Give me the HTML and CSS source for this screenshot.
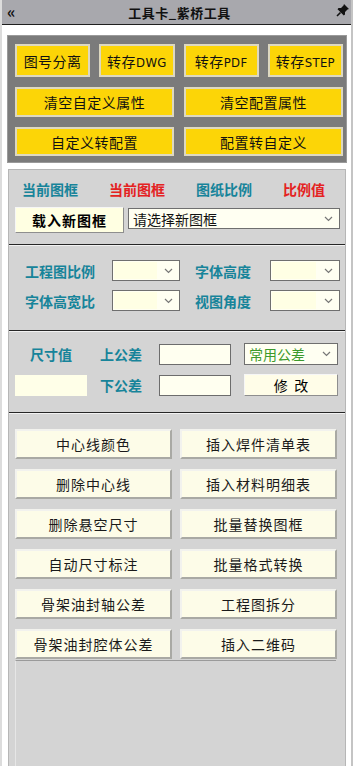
FILE: index.html
```html
<!DOCTYPE html>
<html lang="zh-CN">
<head>
  <meta charset="UTF-8" />
  <meta name="viewport" content="width=device-width, initial-scale=1" />
  <title>工具卡_紫桥工具</title>
  <link rel="stylesheet" href="styles.css">
</head>
<body>
  <div class="window">
    <header class="titlebar">
      <span class="collapse">«</span>
      <span class="title">工具卡_紫桥工具</span>
      <svg class="pin" width="14" height="14" viewBox="0 0 14 14">
        <path d="M8 1 L13 6 L11.5 6.5 L9 9 L9 11.5 L7.8 12.5 L1.5 6.2 L2.5 5 L5 5 L7.5 2.5 Z" fill="#111"/>
        <path d="M4.5 9.5 L1 13" stroke="#111" stroke-width="1.6"/>
      </svg>
    </header>

    <section class="top-panel">
      <div class="row-4">
        <button class="yellow-btn">图号分离</button>
        <button class="yellow-btn">转存<span class="latin">DWG</span></button>
        <button class="yellow-btn">转存<span class="latin">PDF</span></button>
        <button class="yellow-btn">转存<span class="latin">STEP</span></button>
      </div>
      <div class="row-2">
        <button class="yellow-btn">清空自定义属性</button>
        <button class="yellow-btn">清空配置属性</button>
      </div>
      <div class="row-2 last">
        <button class="yellow-btn">自定义转配置</button>
        <button class="yellow-btn">配置转自定义</button>
      </div>
    </section>

    <section class="main-panel">
      <div class="group frame-group">
        <div class="frame-labels">
          <span class="lbl teal">当前图框</span>
          <span class="lbl red">当前图框</span>
          <span class="lbl teal">图纸比例</span>
          <span class="lbl red">比例值</span>
        </div>
        <div class="frame-row">
          <button class="load-btn">载入新图框</button>
          <div class="select wide">
            <span class="select-text">请选择新图框</span>
            <svg class="chev" width="9" height="6" viewBox="0 0 9 6"><path d="M1 1 L4.5 4.5 L8 1" fill="none" stroke="#777" stroke-width="1.2"/></svg>
          </div>
        </div>
      </div>
      <div class="sep"></div>

      <div class="group scale-group">
        <div class="field-row">
          <span class="lbl teal l1">工程图比例</span>
          <div class="select small s1"><span class="fill"></span><svg class="chev" width="9" height="6" viewBox="0 0 9 6"><path d="M1 1 L4.5 4.5 L8 1" fill="none" stroke="#777" stroke-width="1.2"/></svg></div>
          <span class="lbl teal l2">字体高度</span>
          <div class="select small s2"><span class="fill"></span><svg class="chev" width="9" height="6" viewBox="0 0 9 6"><path d="M1 1 L4.5 4.5 L8 1" fill="none" stroke="#777" stroke-width="1.2"/></svg></div>
        </div>
        <div class="field-row">
          <span class="lbl teal l1">字体高宽比</span>
          <div class="select small s1"><span class="fill"></span><svg class="chev" width="9" height="6" viewBox="0 0 9 6"><path d="M1 1 L4.5 4.5 L8 1" fill="none" stroke="#777" stroke-width="1.2"/></svg></div>
          <span class="lbl teal l2">视图角度</span>
          <div class="select small s2"><span class="fill"></span><svg class="chev" width="9" height="6" viewBox="0 0 9 6"><path d="M1 1 L4.5 4.5 L8 1" fill="none" stroke="#777" stroke-width="1.2"/></svg></div>
        </div>
      </div>
      <div class="sep"></div>

      <div class="group tol-group">
        <span class="lbl teal center">尺寸值</span>
        <span class="lbl teal">上公差</span>
        <div class="input"></div>
        <div class="select tol">
          <span class="select-text green">常用公差</span>
          <svg class="chev" width="9" height="6" viewBox="0 0 9 6"><path d="M1 1 L4.5 4.5 L8 1" fill="none" stroke="#777" stroke-width="1.2"/></svg>
        </div>
        <div class="input plain"></div>
        <span class="lbl teal">下公差</span>
        <div class="input"></div>
        <button class="edit-btn">修&nbsp;&nbsp;改</button>
      </div>
      <div class="sep"></div>

      <div class="group tools">
        <button class="cream-btn">中心线颜色</button>
        <button class="cream-btn">插入焊件清单表</button>
        <button class="cream-btn">删除中心线</button>
        <button class="cream-btn">插入材料明细表</button>
        <button class="cream-btn">删除悬空尺寸</button>
        <button class="cream-btn">批量替换图框</button>
        <button class="cream-btn">自动尺寸标注</button>
        <button class="cream-btn">批量格式转换</button>
        <button class="cream-btn">骨架油封轴公差</button>
        <button class="cream-btn">工程图拆分</button>
        <button class="cream-btn">骨架油封腔体公差</button>
        <button class="cream-btn">插入二维码</button>
      </div>
      <div class="bottom-area"></div>
    </section>
  </div>
</body>
</html>
```

FILE: styles.css
```css
body, html {
  margin: 0;
  padding: 0;
  height: 100%;
}
body {
  background: #fff;
  font-family: "Noto Sans CJK SC", "Noto Sans", sans-serif;
  font-size: 14px;
  color: #111;
}
button {
  font-family: inherit;
  padding: 0;
  margin: 0;
  cursor: pointer;
}
.window {
  width: 353px;
  height: 766px;
  box-sizing: border-box;
  display: flex;
  flex-direction: column;
  border-left: 2px solid #dcdcdc;
  border-right: 2px solid #c4c4c4;
  overflow: hidden;
}
.titlebar {
  height: 24px;
  flex: none;
  background: #a8a8ad;
  border-bottom: 1px solid #1e1e1e;
  display: flex;
  align-items: center;
  padding: 0 1px 0 5px;
}
.collapse {
  font-size: 16px;
  font-weight: 700;
  line-height: 1;
  width: 20px;
  margin-top: -2px;
}
.title {
  flex: 1;
  text-align: center;
  font-size: 13px;
  font-weight: 700;
  letter-spacing: 0.5px;
  margin-right: 4px;
}
.pin {
  margin-top: -4px;
}

/* top yellow panel */
.top-panel {
  flex: none;
  margin: 10px 4px 0 5px;
  background: #7b7b7b;
  border: 1px solid #9a9a9a;
  padding: 8px 3px 6px 7px;
  display: flex;
  flex-direction: column;
  gap: 10px;
}
.row-4 { display: grid; grid-template-columns: repeat(4, 1fr); column-gap: 9px; height: 33px; }
.row-2 { display: grid; grid-template-columns: 1fr 1fr; column-gap: 10px; height: 30px; }
.row-2.last { height: 29px; }
.yellow-btn {
  background: #fcd507;
  border: 2px solid #ddd8c0;
  font-size: 14px;
  color: #111;
  letter-spacing: 0.5px;
}
.latin {
  font-family: "DejaVu Sans", sans-serif;
  font-size: 13px;
  font-stretch: condensed;
  letter-spacing: 0.3px;
}

/* main gray panel */
.main-panel {
  flex: 1;
  margin: 6px 5px 0 6px;
  background: #d4d4d4;
  border: 1px solid #b6b6b6;
  border-bottom: none;
  display: flex;
  flex-direction: column;
}
.lbl {
  font-size: 14px;
  font-weight: 700;
  line-height: 18px;
  white-space: nowrap;
}
.teal { color: #17849a; }
.red { color: #e42222; }
.sep {
  height: 0;
  border-top: 1px solid #262626;
  border-bottom: 1px solid #f2f2f2;
}
.select {
  box-sizing: border-box;
  background: #fffff2;
  border: 1px solid #6f6f6f;
  display: flex;
  align-items: center;
  position: relative;
}
.select-text {
  flex: 1;
  padding-left: 4px;
  font-size: 14px;
  line-height: 18px;
}
.chev { margin-right: 6px; flex: none; }
.green { color: #3c9a2c; }

.frame-group {
  padding: 10px 0 11px 0;
  height: 74px;
  box-sizing: border-box;
}
.frame-labels {
  display: flex;
  justify-content: space-between;
  padding: 0 20px 0 13px;
  height: 18px;
}
.frame-row {
  margin-top: 9px;
  display: flex;
  gap: 4px;
  padding-left: 6px;
}
.load-btn {
  width: 109px;
  height: 26px;
  background: #ffffe2;
  border: 1px solid;
  border-color: #f6f6f6 #8e8e8e #8e8e8e #f6f6f6;
  font-size: 14px;
  font-weight: 700;
  letter-spacing: 1px;
}
.select.wide {
  width: 212px;
  height: 21px;
  margin-top: 1px;
}

.scale-group {
  padding: 14px 0 0 16px;
  height: 84px;
  box-sizing: border-box;
  display: flex;
  flex-direction: column;
  gap: 9px;
}
.field-row {
  display: flex;
  align-items: center;
  height: 21px;
}
.l1 { width: 87px; }
.l2 { width: 75px; padding-left: 15px; }
.select.small { height: 21px; justify-content: flex-end; }
.select.s1 { width: 68px; }
.select.s2 { width: 70px; }
.select.small .fill {
  position: absolute;
  left: 1px;
  top: 1px;
  bottom: 1px;
  width: 65%;
  background: #ffffe4;
}

.tol-group {
  display: grid;
  grid-template-columns: 72px 46px 72px 94px;
  grid-template-rows: 22px 22px;
  column-gap: 13px;
  row-gap: 9px;
  padding: 11px 0 0 6px;
  height: 80px;
  box-sizing: border-box;
  align-items: center;
}
.center { text-align: center; }
.input {
  height: 21px;
  box-sizing: border-box;
  background: #fffff0;
  border: 1px solid #6c6c6c;
}
.input.plain {
  border: none;
  background: #ffffe8;
}
.select.tol { height: 22px; }
.edit-btn {
  height: 22px;
  background: #fffde8;
  border: 1px solid;
  border-color: #f6f6f6 #8e8e8e #8e8e8e #f6f6f6;
  font-size: 14px;
}

.tools {
  display: grid;
  grid-template-columns: 157px 157px;
  grid-auto-rows: 30px;
  column-gap: 8px;
  row-gap: 10px;
  padding: 15px 0 0 6px;
}
.cream-btn {
  background: #fdfce8;
  border: 2px solid;
  border-color: #f2f2ee #a9a9a4 #a9a9a4 #f2f2ee;
  font-size: 14px;
  letter-spacing: 1px;
  color: #1a1a1a;
}
.bottom-area {
  flex: 1;
  margin: 1px 9px 0 6px;
  border-top: 1px solid #9a9a9a;
  border-left: 1px solid #e6e6e6;
}
```
